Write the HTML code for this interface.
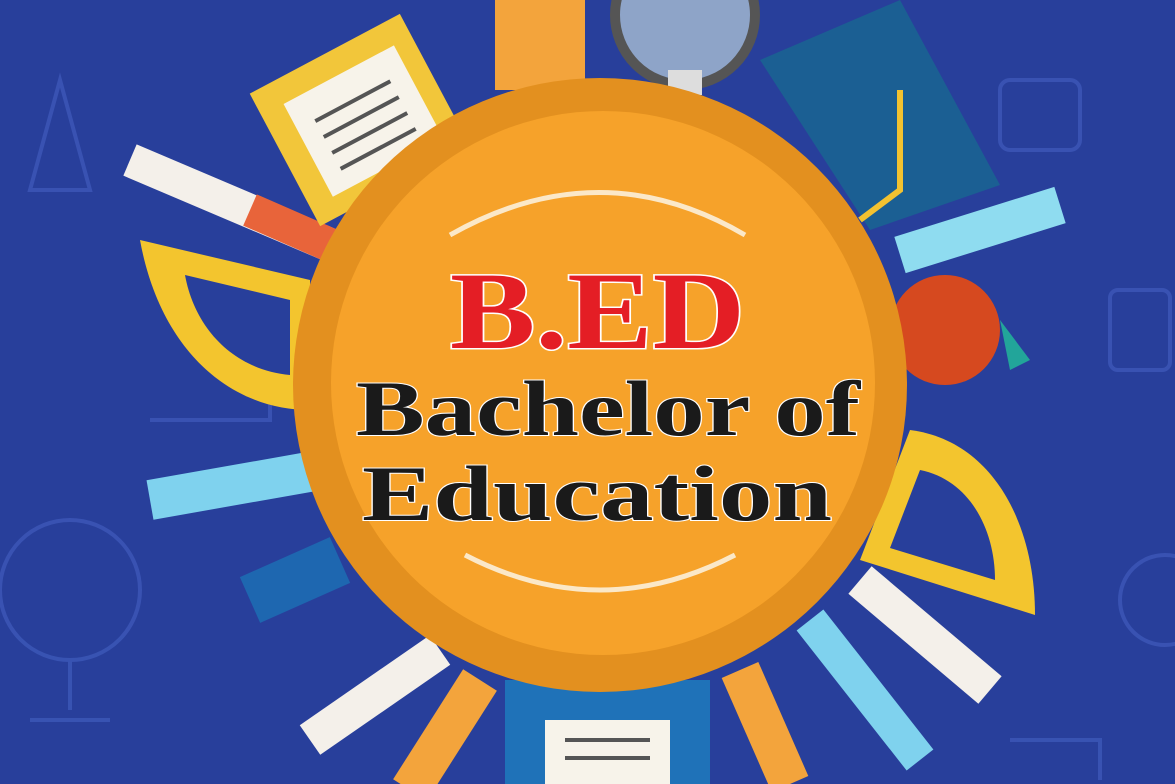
<!DOCTYPE html>
<html><head><meta charset="utf-8"><style>
html,body{margin:0;padding:0;width:1175px;height:784px;overflow:hidden;background:#27409a}
svg{display:block}
</style></head><body>
<svg width="1175" height="784" viewBox="0 0 1175 784" xmlns="http://www.w3.org/2000/svg">
<rect width="1175" height="784" fill="#283f9b"/>
<g fill="none" stroke="#3d58b8" stroke-width="4" opacity="0.8">
<circle cx="70" cy="590" r="70"/><path d="M70 660v50M30 720h80"/>
<path d="M60 80l-30 110h60z"/><rect x="1110" y="290" width="60" height="80" rx="8"/>
<circle cx="1165" cy="600" r="45"/><rect x="1000" y="80" width="80" height="70" rx="10"/>
<path d="M150 420h120v-80"/><path d="M1010 740h90v40"/>
</g>
<g stroke-linecap="butt">
<path d="M130 160L330 245" stroke="#f4f0ea" stroke-width="34"/>
<path d="M250 210L330 245" stroke="#e8643a" stroke-width="34"/>
<path d="M150 500L320 470" stroke="#7fd2ee" stroke-width="40"/>
<path d="M250 600L340 560" stroke="#1e67b0" stroke-width="50"/>
<path d="M310 740L440 650" stroke="#f4f0ea" stroke-width="36"/>
<path d="M410 790L480 680" stroke="#f3a43c" stroke-width="40"/>
<path d="M540 90V0" stroke="#f3a43c" stroke-width="90"/>
<path d="M900 255L1060 205" stroke="#8fdcf0" stroke-width="38"/>
<path d="M860 580L990 690" stroke="#f4f0ea" stroke-width="36"/>
<path d="M810 620L920 760" stroke="#7fd2ee" stroke-width="34"/>
<path d="M740 670L790 784" stroke="#f3a43c" stroke-width="40"/>
</g>
<g transform="rotate(-28 360 120)"><rect x="275" y="45" width="170" height="150" fill="#f2c63a"/><rect x="300" y="70" width="125" height="105" fill="#f7f3ea"/>
<path d="M320 100h85M320 118h85M320 136h85M320 154h85" stroke="#555" stroke-width="4"/></g>
<circle cx="685" cy="15" r="70" fill="#8ea4c8" stroke="#555" stroke-width="10"/>
<rect x="668" y="70" width="34" height="25" fill="#ddd"/>
<path d="M760 60L900 0L1000 185L870 230Z" fill="#1b5f93"/>
<path d="M900 90V190L860 220" stroke="#f3c230" stroke-width="6" fill="none"/>
<path d="M140 240L310 280V410C230 410 160 350 140 240Z" fill="#f3c52e"/>
<path d="M185 275L290 300V375C235 370 195 330 185 275Z" fill="#283f9b"/>
<path d="M910 430C990 440 1035 520 1035 615L860 560Z" fill="#f3c52e"/>
<path d="M920 470C970 480 995 530 995 580L890 548Z" fill="#283f9b"/>
<circle cx="945" cy="330" r="55" fill="#d6491f"/>
<path d="M1000 320l30 40-20 10z" fill="#22a59a"/>
<rect x="505" y="680" width="205" height="110" fill="#1f72b8"/>
<rect x="545" y="720" width="125" height="64" fill="#f7f3ea"/>
<path d="M565 740h85M565 758h85" stroke="#555" stroke-width="4"/>
<circle cx="600" cy="385" r="307" fill="#e3901f"/>
<circle cx="603" cy="383" r="272" fill="#f6a22a"/>
<path d="M450 235Q600 150 745 235" stroke="#fbe8c8" stroke-width="5" fill="none"/>
<path d="M465 555Q600 625 735 555" stroke="#fbe8c8" stroke-width="5" fill="none"/>
<g font-family="Liberation Serif, serif" font-weight="bold">
<text x="450" y="348" font-size="110" textLength="295" lengthAdjust="spacingAndGlyphs" fill="#e41e25" stroke="#fff" stroke-width="3" paint-order="stroke">B.ED</text>
<text x="356" y="435" font-size="78" textLength="504" lengthAdjust="spacingAndGlyphs" fill="#1a1a1a" stroke="#fff" stroke-width="2" paint-order="stroke">Bachelor of</text>
<text x="362" y="520" font-size="78" textLength="470" lengthAdjust="spacingAndGlyphs" fill="#1a1a1a" stroke="#fff" stroke-width="2" paint-order="stroke">Education</text>
</g>
</svg>
</body></html>
